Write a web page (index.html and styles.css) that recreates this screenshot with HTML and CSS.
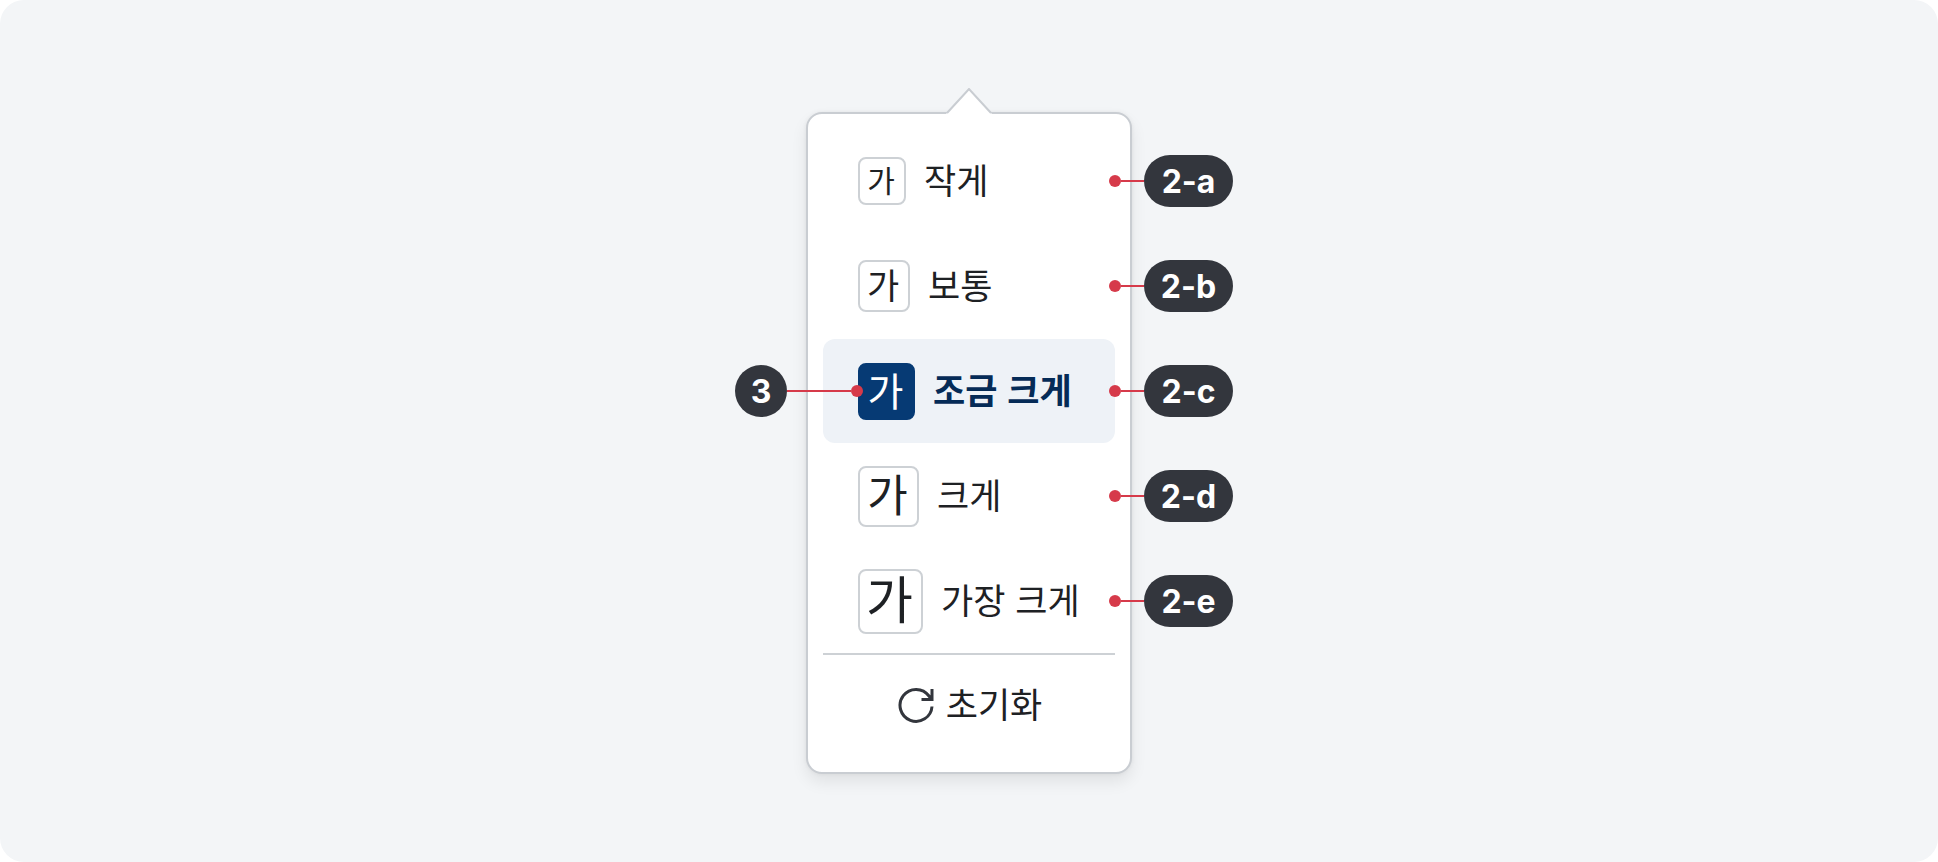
FILE: index.html
```html
<!DOCTYPE html>
<html lang="ko">
<head>
  <meta charset="UTF-8">
  <meta name="viewport" content="width=device-width, initial-scale=1.0">
  <title>글자 크기</title>
  <link rel="stylesheet" href="styles.css">
</head>
<body>
  <main class="stage">
    <div class="popover">
      <svg class="arrow" viewBox="0 0 46 26" aria-hidden="true">
        <path d="M0 26 L1 25 L23 1 L45 25 L46 26 Z" fill="#fff"/>
        <path d="M1 25 L23 1 L45 25" fill="none" stroke="#c9cdd2" stroke-width="2"/>
      </svg>

      <ul class="size-list">
        <li class="size-item">
          <button type="button" class="size-option">
            <span class="sample sample-xs">가</span>
            <span class="label">작게</span>
          </button>
          <span class="callout callout-right"><span class="badge">2-a</span></span>
        </li>
        <li class="size-item">
          <button type="button" class="size-option">
            <span class="sample sample-sm">가</span>
            <span class="label">보통</span>
          </button>
          <span class="callout callout-right"><span class="badge">2-b</span></span>
        </li>
        <li class="size-item">
          <button type="button" class="size-option active" aria-pressed="true">
            <span class="sample sample-md">가</span>
            <span class="label">조금 크게</span>
          </button>
          <span class="callout callout-left"><span class="badge badge-round">3</span></span>
          <span class="callout callout-right"><span class="badge">2-c</span></span>
        </li>
        <li class="size-item">
          <button type="button" class="size-option">
            <span class="sample sample-lg">가</span>
            <span class="label">크게</span>
          </button>
          <span class="callout callout-right"><span class="badge">2-d</span></span>
        </li>
        <li class="size-item">
          <button type="button" class="size-option">
            <span class="sample sample-xl">가</span>
            <span class="label">가장 크게</span>
          </button>
          <span class="callout callout-right"><span class="badge">2-e</span></span>
        </li>
      </ul>

      <button type="button" class="reset">
        <svg class="reset-icon" viewBox="0 0 36 36" aria-hidden="true">
          <path d="M34 19.5 A16 16 0 1 1 31 9 L33.5 12.5 M34 2 V12.5 H23.5" fill="none" stroke="#33363d" stroke-width="3"/>
        </svg>
        <span class="label">초기화</span>
      </button>
    </div>
  </main>
</body>
</html>
```
FILE: styles.css
```css
* {
  margin: 0;
  padding: 0;
  box-sizing: border-box;
}

body {
  font-family: "Noto Sans CJK KR", sans-serif;
  background-color: #ffffff;
  color: #1e2124;
}

.stage {
  display: flex;
  justify-content: center;
  align-items: center;
  min-height: 100vh;
  padding-top: 24px;
  background-color: #f3f5f7;
  border-radius: 24px;
}

.popover {
  position: relative;
  min-width: 326px;
  padding: 15px 15px 17px;
  background-color: #ffffff;
  border: 2px solid #c9cdd2;
  border-radius: 16px;
  box-shadow: 0 8px 16px rgba(0, 0, 0, 0.08), 0 0 4px rgba(0, 0, 0, 0.06);
}

.arrow {
  position: absolute;
  top: -26px;
  left: 50%;
  width: 46px;
  height: 26px;
  margin-left: -23px;
}

/* Size list */
.size-list {
  display: flex;
  flex-direction: column;
  gap: 1px;
  list-style: none;
  border-bottom: 2px solid #cdd1d5;
}

.size-item {
  position: relative;
}

.size-option,
.reset {
  display: flex;
  align-items: center;
  width: 100%;
  height: 104px;
  border: none;
  border-radius: 12px;
  background-color: transparent;
  color: inherit;
  font-family: inherit;
  font-size: 35px;
  line-height: 48px;
  white-space: nowrap;
  cursor: pointer;
}

.size-option {
  gap: 18px;
  padding: 0 32px 0 35px;
}

.size-option.active {
  background-color: #eef2f7;
  color: #052b57;
  font-weight: bold;
}

.label {
  padding-bottom: 4px;
}

.sample {
  display: flex;
  justify-content: center;
  align-items: center;
  padding: 0 2px 4px 0;
  border: 2px solid #cdd1d5;
  border-radius: 8px;
  background-color: #ffffff;
  font-weight: normal;
}

.active .sample {
  border-color: #063a74;
  background-color: #063a74;
  color: #ffffff;
}

.sample-xs {
  width: 48px;
  height: 48px;
  font-size: 30px;
}

.sample-sm {
  width: 52px;
  height: 52px;
  font-size: 35px;
}

.sample-md {
  width: 57px;
  height: 57px;
  font-size: 39px;
}

.sample-lg {
  width: 61px;
  height: 61px;
  padding-bottom: 6px;
  font-size: 44px;
}

.sample-xl {
  width: 65px;
  height: 65px;
  padding-bottom: 8px;
  font-size: 51px;
}

.reset {
  justify-content: center;
  gap: 12px;
  height: 100px;
  padding-left: 2px;
}

.reset-icon {
  width: 36px;
  height: 36px;
}

/* Callouts */
.callout {
  position: absolute;
  top: 0;
  bottom: 0;
  display: flex;
  align-items: center;
  pointer-events: none;
}

.callout::before {
  content: "";
  width: 12px;
  height: 12px;
  border-radius: 50%;
  background-color: #d63a4a;
}

.callout::after {
  content: "";
  order: 1;
  width: 23px;
  height: 2px;
  background-color: #d63a4a;
}

.badge {
  order: 2;
  min-width: 89px;
  height: 52px;
  border-radius: 26px;
  background-color: #33363d;
  color: #ffffff;
  font-family: Inter, sans-serif;
  font-size: 32px;
  font-weight: bold;
  line-height: 54px;
  text-align: center;
}

.badge-round {
  min-width: 52px;
}

.callout-right {
  left: 100%;
  margin-left: -6px;
}

.callout-left {
  right: 100%;
  flex-direction: row-reverse;
  margin-right: -40px;
}

.callout-left::after {
  width: 64px;
}
```
